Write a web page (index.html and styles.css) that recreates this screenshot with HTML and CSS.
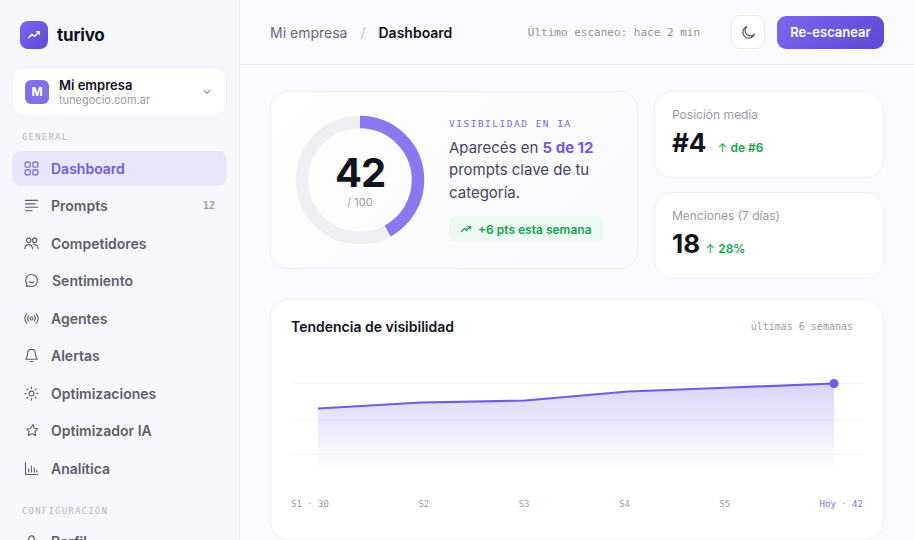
FILE: index.html
```html
<!DOCTYPE html>
<html lang="es">
<head>
    <meta charset="UTF-8">
    <meta name="viewport" content="width=device-width, initial-scale=1.0">
    <title>Dashboard - turivo</title>
    <link rel="stylesheet" href="styles.css">
</head>
<body>
    <div class="app">
        <aside class="sidebar">
            <div class="brand">
                <span class="brand-logo">
                    <svg viewBox="0 0 24 24" width="16" height="16" fill="none" stroke="#fff" stroke-width="2.2" stroke-linecap="round" stroke-linejoin="round"><path d="M4 16l5-5 4 3 7-7"/><path d="M16 7h4v4"/></svg>
                </span>
                <span class="brand-name">turivo</span>
            </div>

            <div class="workspace">
                <span class="workspace-avatar">M</span>
                <div class="workspace-info">
                    <div class="workspace-name">Mi empresa</div>
                    <div class="workspace-url">tunegocio.com.ar</div>
                </div>
                <svg class="workspace-chevron" viewBox="0 0 24 24" width="12" height="12" fill="none" stroke="#9a9aa8" stroke-width="2.4" stroke-linecap="round" stroke-linejoin="round"><path d="M6 9l6 6 6-6"/></svg>
            </div>

            <div class="nav-label">GENERAL</div>
            <nav class="nav">
                <a class="nav-item active">
                    <svg viewBox="0 0 16 16"><rect x="1.2" y="1.2" width="5.4" height="5.4" rx="1.2"/><rect x="9.4" y="1.2" width="5.4" height="5.4" rx="1.2"/><rect x="1.2" y="9.4" width="5.4" height="5.4" rx="1.2"/><rect x="9.4" y="9.4" width="5.4" height="5.4" rx="1.2"/></svg>
                    Dashboard
                </a>
                <a class="nav-item">
                    <svg viewBox="0 0 16 16"><path d="M1.5 2.5h13M1.5 6.2h10.5M1.5 9.9h13M1.5 13.6h7"/></svg>
                    Prompts
                    <span class="nav-count">12</span>
                </a>
                <a class="nav-item">
                    <svg viewBox="0 0 16 16"><circle cx="5" cy="4.6" r="2.4"/><circle cx="11.4" cy="4.6" r="2.4"/><path d="M1 13.6c0-2.8 1.7-4.4 4-4.4s4 1.6 4 4.4M10.4 9.3c2.6-.4 4.6 1.4 4.6 4.3"/></svg>
                    Competidores
                </a>
                <a class="nav-item">
                    <svg viewBox="0 0 16 16"><path d="M8 1.6a6.4 6.4 0 1 1-2.9 12.1l-2.6.7.6-2.5A6.4 6.4 0 0 1 8 1.6z"/><path d="M5.4 9.2c1.2 1.4 3.9 1.4 5.2 0"/></svg>
                    <span class="nudge">Sentimiento</span>
                </a>
                <a class="nav-item">
                    <svg viewBox="0 0 16 16"><circle cx="8" cy="8" r="1.6"/><path d="M5.2 5.2a4 4 0 0 0 0 5.6M10.8 5.2a4 4 0 0 1 0 5.6M3 3a7 7 0 0 0 0 10M13 3a7 7 0 0 1 0 10"/></svg>
                    Agentes
                </a>
                <a class="nav-item">
                    <svg viewBox="0 0 16 16"><path d="M8 1.4c-2.7 0-4.2 2-4.2 4.6 0 3.4-1.6 5-2 6h12.400c-.4-1-2-2.600-2-6 0-2.600-1.500-4.600-4.200-4.600z"/><path d="M6.600 14.400h2.800"/></svg>
                    Alertas
                </a>
                <a class="nav-item">
                    <svg viewBox="0 0 16 16"><circle cx="8" cy="8" r="2.600"/><path d="M8 1v1.600M8 13.400V15M1 8h1.600M13.400 8H15M3 3l1.200 1.200M11.800 11.800L13 13M3 13l1.200-1.200M11.800 4.200L13 3"/></svg>
                    Optimizaciones
                </a>
                <a class="nav-item">
                    <svg viewBox="0 0 16 16"><path d="M9.600 1.600l1.300 4 3.700.6-3 3 .8 4-3.700-1.800-4 2 .8-4.200-2.300-2.800 3.600-.6z"/></svg>
                    Optimizador IA
                </a>
                <a class="nav-item">
                    <svg viewBox="0 0 16 16"><path d="M1.600 2v12.400h13M5 11.600V8.400M8 11.600V5.600M11 11.600V7.600M13.600 11.600v-1.800"/></svg>
                    Analítica
                </a>
            </nav>
            <div class="nav-label nav-label-second">CONFIGURACIÓN</div>
            <nav class="nav">
                <a class="nav-item">
                    <svg viewBox="0 0 16 16"><circle cx="8" cy="5" r="3"/><path d="M2.500 14.500c0-3 2.500-5 5.500-5s5.500 2 5.500 5"/></svg>
                    Perfil
                </a>
            </nav>
        </aside>

        <main class="main">
            <header class="topbar">
                <div class="crumbs">
                    <span class="crumb">Mi empresa</span>
                    <span class="crumb-sep">/</span>
                    <span class="crumb-current">Dashboard</span>
                </div>
                <div class="topbar-right">
                    <span class="scan-text">Último escaneo: hace 2 min</span>
                    <button class="icon-btn">
                        <svg viewBox="0 0 24 24" width="17" height="17" fill="none" stroke="#55556a" stroke-width="1.700" stroke-linecap="round" stroke-linejoin="round"><path d="M20.500 14.500A8.500 8.500 0 1 1 9.500 3.500a7 7 0 0 0 11 11z"/></svg>
                    </button>
                    <button class="primary-btn">Re-escanear</button>
                </div>
            </header>

            <div class="content">
                <div class="top-grid">
                    <section class="card hero">
                        <div class="gauge">
                            <svg viewBox="0 0 130 130" width="130" height="130">
                                <circle cx="65" cy="65" r="58" fill="none" stroke="#efeff3" stroke-width="12.500"/>
                                <circle cx="65" cy="65" r="58" fill="none" stroke="#8a78f0" stroke-width="12.500" stroke-dasharray="153.100 364.400" transform="rotate(-90 65 65)"/>
                            </svg>
                            <div class="gauge-text">
                                <div class="gauge-value">42</div>
                                <div class="gauge-total">/ 100</div>
                            </div>
                        </div>
                        <div class="hero-body">
                            <div class="eyebrow">VISIBILIDAD EN IA</div>
                            <p class="hero-text">Aparecés en <strong>5 de 12</strong> prompts clave de tu categoría.</p>
                            <span class="trend-pill">
                                <svg viewBox="0 0 24 24" width="12" height="12" fill="none" stroke="#16a34a" stroke-width="2.400" stroke-linecap="round" stroke-linejoin="round"><path d="M3 17l6-6 4 4 8-8"/><path d="M16 7h5v5"/></svg>
                                +6 pts esta semana
                            </span>
                        </div>
                    </section>

                    <div class="stats">
                        <section class="card stat">
                            <div class="stat-label">Posición media</div>
                            <div class="stat-row">
                                <span class="stat-value">#4</span>
                                <span class="stat-delta stat-delta-wide"><span class="arrow">↑</span> de #6</span>
                            </div>
                        </section>
                        <section class="card stat">
                            <div class="stat-label">Menciones (7 días)</div>
                            <div class="stat-row">
                                <span class="stat-value">18</span>
                                <span class="stat-delta"><span class="arrow">↑</span> 28%</span>
                            </div>
                        </section>
                    </div>
                </div>

                <section class="card chart-card">
                    <div class="chart-head">
                        <h2>Tendencia de visibilidad</h2>
                        <span class="chart-range">últimas 6 semanas</span>
                    </div>
                    <svg class="chart" viewBox="0 0 572 130" width="572" height="130">
                        <defs>
                            <linearGradient id="areaFill" x1="0" y1="0" x2="0" y2="1">
                                <stop offset="0" stop-color="#7c67ee" stop-opacity="0.28"/>
                                <stop offset="1" stop-color="#7c67ee" stop-opacity="0"/>
                            </linearGradient>
                        </defs>
                        <path class="grid-line" d="M0 14.500H572M0 50.500H572M0 85.500H572"/>
                        <path fill="url(#areaFill)" d="M27 39.500L130 33.500L234 31.500L337 22.500L440 18.500L543 14.500V102H27Z"/>
                        <polyline class="trend-line" points="27,39.500 130,33.500 234,31.500 337,22.500 440,18.500 543,14.500"/>
                        <circle cx="543" cy="14.500" r="4.500" fill="#6c5ce7"/>
                    </svg>
                    <div class="chart-axis">
                        <span>S1 · 30</span>
                        <span>S2</span>
                        <span>S3</span>
                        <span>S4</span>
                        <span>S5</span>
                        <span class="axis-now">Hoy · 42</span>
                    </div>
                </section>
            </div>
        </main>
    </div>
</body>
</html>
```

FILE: styles.css
```css
* {
    box-sizing: border-box;
}
html,
body {
    height: 100%;
}
body {
    margin: 0;
    font-family: Inter, "Liberation Sans", sans-serif;
    color: #12121c;
    background-color: #fafaff;
    overflow: hidden;
}
.app {
    display: flex;
    height: 540px;
    overflow: hidden;
}
.sidebar {
    width: 240px;
    flex-shrink: 0;
    padding: 21px 12px 0;
    background-color: #f7f7fd;
    border-right: 1px solid #eeeef5;
}
.brand {
    display: flex;
    align-items: center;
    gap: 9px;
    padding-left: 8px;
    margin-bottom: 18px;
}
.brand-logo {
    width: 28px;
    height: 28px;
    display: flex;
    align-items: center;
    justify-content: center;
    border-radius: 8px;
    background: linear-gradient(135deg, #7c67ee, #5f48d6);
}
.brand-name {
    font-size: 17px;
    font-weight: 700;
    letter-spacing: -0.2px;
}
.workspace {
    display: flex;
    align-items: center;
    gap: 10px;
    height: 49px;
    padding: 0 13px 0 12px;
    background-color: #fff;
    border: 1px solid #f1f1f7;
    border-radius: 12px;
}
.workspace-avatar {
    width: 24px;
    height: 24px;
    display: flex;
    align-items: center;
    justify-content: center;
    border-radius: 6px;
    background-color: #8270e8;
    color: #fff;
    font-size: 12px;
    font-weight: 700;
}
.workspace-info {
    flex: 1;
}
.workspace-name {
    font-size: 13px;
    font-weight: 600;
    line-height: 16px;
}
.workspace-url {
    font-size: 11px;
    line-height: 14px;
    color: #9a9aa8;
}
.nav-label {
    margin: 16px 0 9px 10px;
    font-family: "DejaVu Sans Mono", monospace;
    font-size: 9px;
    letter-spacing: 1.2px;
    color: #b6b6c4;
}
.nav-label-second {
    margin-top: 20px;
}
.nav {
    display: flex;
    flex-direction: column;
    gap: 3px;
}
.nav-item {
    display: flex;
    align-items: center;
    gap: 12px;
    height: 34.500px;
    padding: 0 12px;
    border-radius: 9px;
    font-size: 14px;
    font-weight: 600;
    color: #5d5d6e;
}
.nav-item svg {
    width: 15px;
    height: 15px;
    margin-left: 0;
    flex-shrink: 0;
    fill: none;
    stroke: #5d5d6e;
    stroke-width: 1.200;
    stroke-linecap: round;
    stroke-linejoin: round;
}
.nav-item.active {
    background-color: #e9e6fa;
    color: #6c5ce7;
}
.nav-item.active svg {
    stroke: #6c5ce7;
}
.nudge {
    margin-left: 1px;
}
.nav-count {
    margin-left: auto;
    font-family: "DejaVu Sans Mono", monospace;
    font-size: 10px;
    color: #a0a0ae;
}
.main {
    flex: 1;
    min-width: 0;
}
.topbar {
    height: 65px;
    display: flex;
    align-items: center;
    justify-content: space-between;
    padding: 0 30px;
    border-bottom: 1px solid #eeeef5;
}
.crumbs {
    display: flex;
    align-items: center;
    font-size: 14px;
}
.crumb {
    color: #66667a;
}
.crumb-sep {
    margin: 0 13px;
    color: #c4c4d0;
}
.crumb-current {
    font-weight: 600;
}
.topbar-right {
    display: flex;
    align-items: center;
}
.scan-text {
    font-family: "DejaVu Sans Mono", monospace;
    font-size: 11px;
    color: #8f8fa0;
    margin-right: 31px;
}
.icon-btn {
    width: 34px;
    height: 34px;
    display: flex;
    align-items: center;
    justify-content: center;
    padding: 0;
    margin-right: 12px;
    background-color: #fff;
    border: 1px solid #ececf3;
    border-radius: 10px;
}
.primary-btn {
    width: 107px;
    height: 33px;
    border: none;
    border-radius: 9px;
    background: linear-gradient(135deg, #7c67ee, #5f48d6);
    color: #fff;
    font-family: inherit;
    font-size: 13px;
    font-weight: 600;
}
.content {
    padding: 26px 30px 0;
}
.card {
    background-color: #fff;
    border: 1px solid #f0f0f6;
    border-radius: 18px;
}
.top-grid {
    display: grid;
    grid-template-columns: 368px 230px;
    gap: 16px;
    align-items: start;
}
.hero {
    display: flex;
    align-items: center;
    gap: 24px;
    height: 178px;
    padding: 0 24px;
    background: linear-gradient(135deg, #fff, #f9f9fe);
}
.gauge {
    position: relative;
    width: 130px;
    height: 130px;
    flex-shrink: 0;
}
.gauge-text {
    position: absolute;
    inset: 0;
    display: flex;
    flex-direction: column;
    align-items: center;
    justify-content: center;
}
.gauge-value {
    font-size: 40px;
    font-weight: 700;
    line-height: 44px;
    letter-spacing: -1px;
}
.gauge-total {
    font-size: 11px;
    line-height: 14px;
    color: #9a9aa8;
}
.eyebrow {
    font-family: "DejaVu Sans Mono", monospace;
    font-size: 9.500px;
    letter-spacing: 1.500px;
    color: #7c67ee;
    margin-bottom: 8px;
}
.hero-text {
    margin: 0 0 12px;
    font-size: 15px;
    line-height: 22.500px;
    color: #44445a;
}
.hero-text strong {
    font-weight: 700;
    color: #6c5ce7;
}
.trend-pill {
    display: inline-flex;
    align-items: center;
    gap: 6px;
    height: 26px;
    padding: 0 11px;
    border-radius: 7px;
    background-color: #ecf8f0;
    color: #16a34a;
    font-size: 12px;
    font-weight: 600;
}
.stats {
    display: flex;
    flex-direction: column;
    gap: 14px;
}
.stat {
    height: 87px;
    padding: 15px 17px 0;
}
.stat-label {
    font-size: 12px;
    line-height: 16px;
    color: #9a9aa8;
}
.stat-row {
    display: flex;
    align-items: baseline;
    margin-top: 4px;
}
.stat-value {
    font-size: 26px;
    font-weight: 700;
    line-height: 32px;
}
.stat-delta {
    margin-left: 5px;
    font-size: 12px;
    font-weight: 600;
    color: #16a34a;
}
.stat-delta-wide {
    margin-left: 11px;
}
.arrow {
    font-weight: 400;
}
.chart-card {
    margin-top: 20px;
    height: 241px;
    padding: 18px 20px 0;
}
.chart-head {
    display: flex;
    align-items: center;
    justify-content: space-between;
    padding-right: 10px;
}
.chart-head h2 {
    margin: 0;
    font-size: 14px;
    font-weight: 600;
}
.chart-range {
    font-family: "DejaVu Sans Mono", monospace;
    font-size: 10px;
    color: #9a9aa8;
}
.chart {
    display: block;
    margin-top: 34px;
}
.grid-line {
    fill: none;
    stroke: #f3f3f8;
    stroke-width: 1;
}
.trend-line {
    fill: none;
    stroke: #6c5ce7;
    stroke-width: 2.200;
    stroke-linejoin: round;
}
.chart-axis {
    display: flex;
    justify-content: space-between;
    margin-top: 0;
    font-family: "DejaVu Sans Mono", monospace;
    font-size: 9px;
    color: #9a9aa8;
}
.axis-now {
    color: #7c67ee;
}
```
